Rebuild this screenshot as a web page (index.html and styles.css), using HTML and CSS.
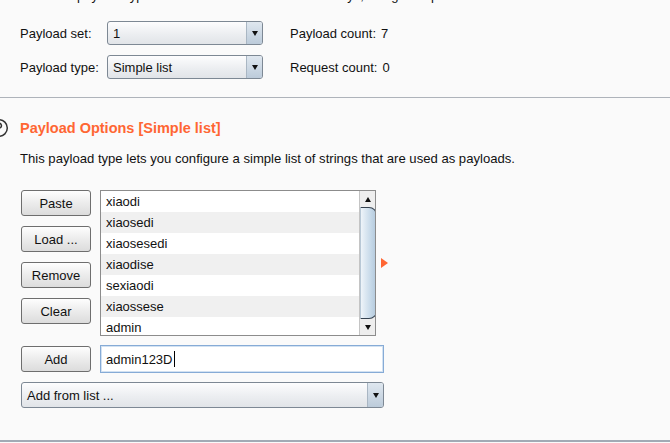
FILE: index.html
```html
<!DOCTYPE html>
<html>
<head>
<meta charset="utf-8">
<link rel="stylesheet" href="styles.css">
</head>
<body>
<p class="top-text">and each payload type can be customized in different ways, using the options below.</p>

<div class="settings">
  <span class="lbl">Payload set:</span>
  <div class="select"><span class="sel-text">1</span><span class="sel-arrow"><i class="tri-down"></i></span></div>
  <span class="count">Payload count:<span class="num">7</span></span>
  <span class="lbl">Payload type:</span>
  <div class="select"><span class="sel-text">Simple list</span><span class="sel-arrow"><i class="tri-down"></i></span></div>
  <span class="count">Request count:<span class="num">0</span></span>
</div>

<div class="sep"></div>

<section class="options">
  <div class="head">
    <svg class="help" width="20" height="20" viewBox="0 0 20 20">
      <circle cx="10" cy="10" r="8.3" fill="none" stroke="#333" stroke-width="1.5"/>
      <path d="M7.6 7.6a2.4 2.4 0 1 1 3.4 2.2c-.7.4-1 .8-1 1.6v.6" fill="none" stroke="#333" stroke-width="1.5"/>
      <circle cx="10" cy="14.3" r="0.9" fill="#333"/>
    </svg>
    <h2>Payload Options [Simple list]</h2>
  </div>
  <p class="desc">This payload type lets you configure a simple list of strings that are used as payloads.</p>

  <div class="editor">
    <div class="btn-col">
      <button class="btn">Paste</button>
      <button class="btn">Load ...</button>
      <button class="btn">Remove</button>
      <button class="btn">Clear</button>
    </div>
    <div class="list-area">
      <div class="list">
        <div class="rows">
          <div class="row">xiaodi</div>
          <div class="row alt">xiaosedi</div>
          <div class="row">xiaosesedi</div>
          <div class="row alt">xiaodise</div>
          <div class="row">sexiaodi</div>
          <div class="row alt">xiaossese</div>
          <div class="row">admin</div>
        </div>
        <div class="scrollbar">
          <div class="sb-btn"><i class="tri-up"></i></div>
          <div class="sb-track"><div class="sb-thumb"></div></div>
          <div class="sb-btn"><i class="tri-down"></i></div>
        </div>
      </div>
      <i class="marker"></i>
    </div>
    <button class="btn add">Add</button>
    <div class="input"><span>admin123D</span><span class="caret"></span></div>
    <div class="select wide"><span class="sel-text">Add from list ...</span><span class="sel-arrow"><i class="tri-down"></i></span></div>
  </div>
</section>

<div class="bottom-line"></div>
</body>
</html>
```
FILE: styles.css
```css
html, body {
  margin: 0;
  padding: 0;
  background: #fafafa;
  font-family: "Liberation Sans", Arial, sans-serif;
  font-size: 13px;
  color: #111;
  overflow: hidden;
}
body { height: 443px; position: relative; }

.top-text {
  margin: -12px 0 0 20px;
  line-height: 15px;
  white-space: nowrap;
}

.settings {
  margin-top: 18px;
  padding-left: 20px;
  display: grid;
  grid-template-columns: 87px 156px auto;
  row-gap: 10px;
  align-items: center;
}
.lbl { font-size: 13px; }
.count { margin-left: 27px; font-size: 13px; }
.count .num { margin-left: 5px; }

.select {
  height: 24px;
  box-sizing: border-box;
  border: 1px solid #7d8894;
  border-radius: 3px;
  background: linear-gradient(#fdfdfe, #eceef1 55%, #e1e4e8);
  display: flex;
  align-items: stretch;
  overflow: hidden;
}
.sel-text {
  flex: 1;
  display: flex;
  align-items: center;
  padding-left: 5px;
  font-size: 13px;
}
.sel-arrow {
  width: 15px;
  border-left: 1px solid #a9b6c3;
  background: linear-gradient(#dfe7ef, #bccbda);
  display: flex;
  align-items: center;
  justify-content: center;
}
.tri-down {
  display: block;
  width: 0; height: 0;
  border-left: 3.5px solid transparent;
  border-right: 3.5px solid transparent;
  border-top: 5px solid #111;
}
.tri-up {
  display: block;
  width: 0; height: 0;
  border-left: 3.5px solid transparent;
  border-right: 3.5px solid transparent;
  border-bottom: 5px solid #111;
}

.sep {
  margin-top: 18px;
  height: 1px;
  background: #aeb3ba;
}

.options { padding-left: 20px; }
.head {
  margin-top: 20px;
  display: flex;
  align-items: center;
  height: 20px;
}
.help { margin-left: -31px; margin-right: 11px; flex: none; }
.head h2 {
  margin: 0;
  font-size: 14.5px;
  font-weight: bold;
  color: #ff6633;
}
.desc {
  margin: 13px 0 0;
  line-height: 16px;
  font-size: 13.1px;
}

.editor {
  margin-top: 23px;
  margin-left: 1px;
  display: grid;
  grid-template-columns: 70px auto;
  column-gap: 9px;
  row-gap: 9px;
  align-items: center;
  justify-items: start;
}
.btn-col {
  display: flex;
  flex-direction: column;
  gap: 10px;
  align-self: start;
}
.btn {
  width: 70px;
  height: 26px;
  box-sizing: border-box;
  border: 1px solid #6e6e6e;
  border-radius: 3px;
  background: linear-gradient(#fefefe, #ececec 50%, #dcdcdc);
  font-family: "Liberation Sans", Arial, sans-serif;
  font-size: 13px;
  color: #111;
  padding: 0;
}
.list-area {
  display: flex;
  align-items: center;
  gap: 5px;
  align-self: start;
}
.list {
  width: 276px;
  height: 146px;
  box-sizing: border-box;
  border: 1px solid #8c8c8c;
  background: #fff;
  display: flex;
  overflow: hidden;
}
.rows { flex: 1; }
.row {
  height: 21px;
  line-height: 21px;
  padding-left: 5px;
  font-size: 13px;
}
.row.alt { background: #f0f0f0; }
.scrollbar {
  width: 15px;
  border-left: 1px solid #c4c4c4;
  background: #eeeeee;
  display: flex;
  flex-direction: column;
}
.sb-btn {
  height: 16px;
  display: flex;
  align-items: center;
  justify-content: center;
  flex: none;
}
.sb-track { flex: 1; display: flex; }
.sb-thumb {
  flex: 1;
  margin-right: -2px;
  border: 1px solid #34414f;
  border-left-color: #b8c8d6;
  border-radius: 0 8px 8px 0;
  background: linear-gradient(to right, #eef4f9, #c9dbea 60%, #b3c9dc);
}
.marker {
  display: block;
  width: 0; height: 0;
  border-top: 5px solid transparent;
  border-bottom: 5px solid transparent;
  border-left: 7px solid #ff6633;
}
.add { align-self: center; }
.input {
  width: 284px;
  height: 28px;
  box-sizing: border-box;
  border: 1px solid #86abd6;
  box-shadow: inset 0 0 0 1px #d3e2f2;
  background: #fff;
  display: flex;
  align-items: center;
  padding-left: 5px;
  font-size: 13px;
}
.caret {
  display: inline-block;
  width: 1px;
  height: 16px;
  background: #000;
  margin-left: 1px;
}
.select.wide {
  grid-column: 1 / 3;
  width: 363px;
  height: 26px;
}

.bottom-line {
  position: absolute;
  left: 0; right: 0;
  top: 440px;
  height: 2px;
  background: #a2aab5;
}
```
